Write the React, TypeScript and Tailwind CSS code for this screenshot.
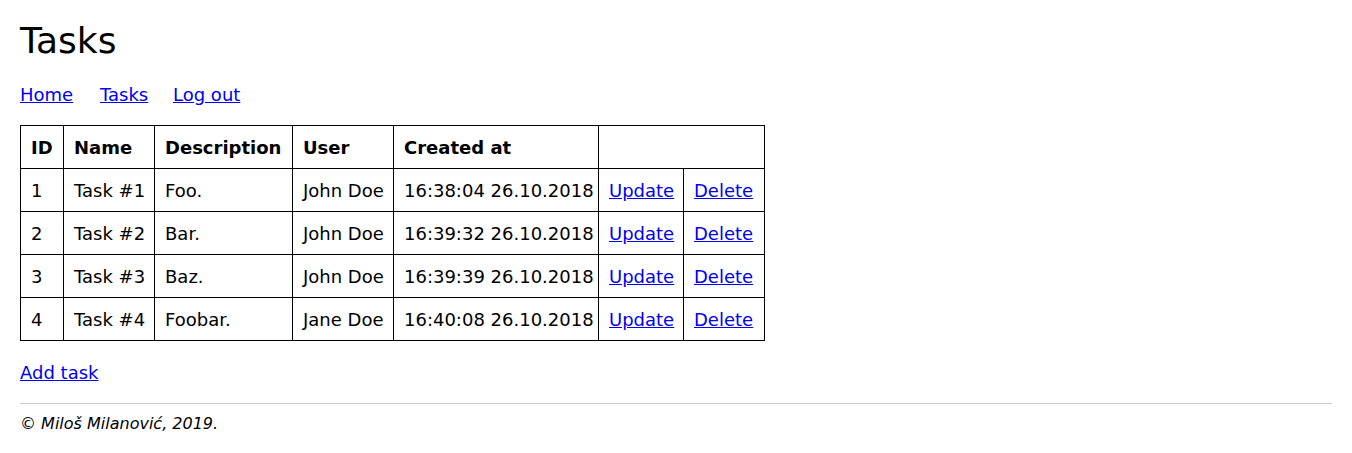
import React from "react";

const rows = [
  { id: 1, name: "Task #1", desc: "Foo.", user: "John Doe", at: "16:38:04 26.10.2018" },
  { id: 2, name: "Task #2", desc: "Bar.", user: "John Doe", at: "16:39:32 26.10.2018" },
  { id: 3, name: "Task #3", desc: "Baz.", user: "John Doe", at: "16:39:39 26.10.2018" },
  { id: 4, name: "Task #4", desc: "Foobar.", user: "Jane Doe", at: "16:40:08 26.10.2018" },
];

const td = "border border-black px-[10px] pt-[11px] pb-[9px] leading-[22px] text-left whitespace-nowrap overflow-visible";
const link = "text-[#0000ee] underline";

export default function App() {
  return (
    <div className="bg-white text-black px-[20px] pt-[20px] text-[18px] min-h-[453px]" style={{ fontFamily: '"DejaVu Sans", sans-serif' }}>
      <h1 className="text-[36px] leading-[42px] font-normal">Tasks</h1>
      <nav className="flex mt-[22px] leading-[21px]">
        <span className="w-[80px]"><a href="#" className={link}>Home</a></span>
        <span className="w-[73px]"><a href="#" className={link}>Tasks</a></span>
        <span><a href="#" className={link}>Log out</a></span>
      </nav>
      <table className="border-collapse table-fixed w-[744px] mt-[20px]">
        <colgroup>
          <col className="w-[43px]" />
          <col className="w-[91px]" />
          <col className="w-[138px]" />
          <col className="w-[101px]" />
          <col className="w-[205px]" />
          <col className="w-[85px]" />
          <col className="w-[81px]" />
        </colgroup>
        <thead>
          <tr>
            <th className={td + " font-bold"}>ID</th>
            <th className={td + " font-bold"}>Name</th>
            <th className={td + " font-bold"}>Description</th>
            <th className={td + " font-bold"}>User</th>
            <th className={td + " font-bold"}>Created at</th>
            <th className={td} colSpan={2}></th>
          </tr>
        </thead>
        <tbody>
          {rows.map((r) => (
            <tr key={r.id}>
              <td className={td}>{r.id}</td>
              <td className={td}>{r.name}</td>
              <td className={td}>{r.desc}</td>
              <td className={td}>{r.user}</td>
              <td className={td}>{r.at}</td>
              <td className={td}><a href="#" className={link}>Update</a></td>
              <td className={td}><a href="#" className={link}>Delete</a></td>
            </tr>
          ))}
        </tbody>
      </table>
      <div className="mt-[21px] leading-[21px]">
        <a href="#" className={link}>Add task</a>
      </div>
      <hr className="mt-[20px] border-0 border-t border-[#cccccc]" />
      <p className="italic mt-[10px] text-[16px] leading-[19px]">© Miloš Milanović, 2019.</p>
    </div>
  );
}
